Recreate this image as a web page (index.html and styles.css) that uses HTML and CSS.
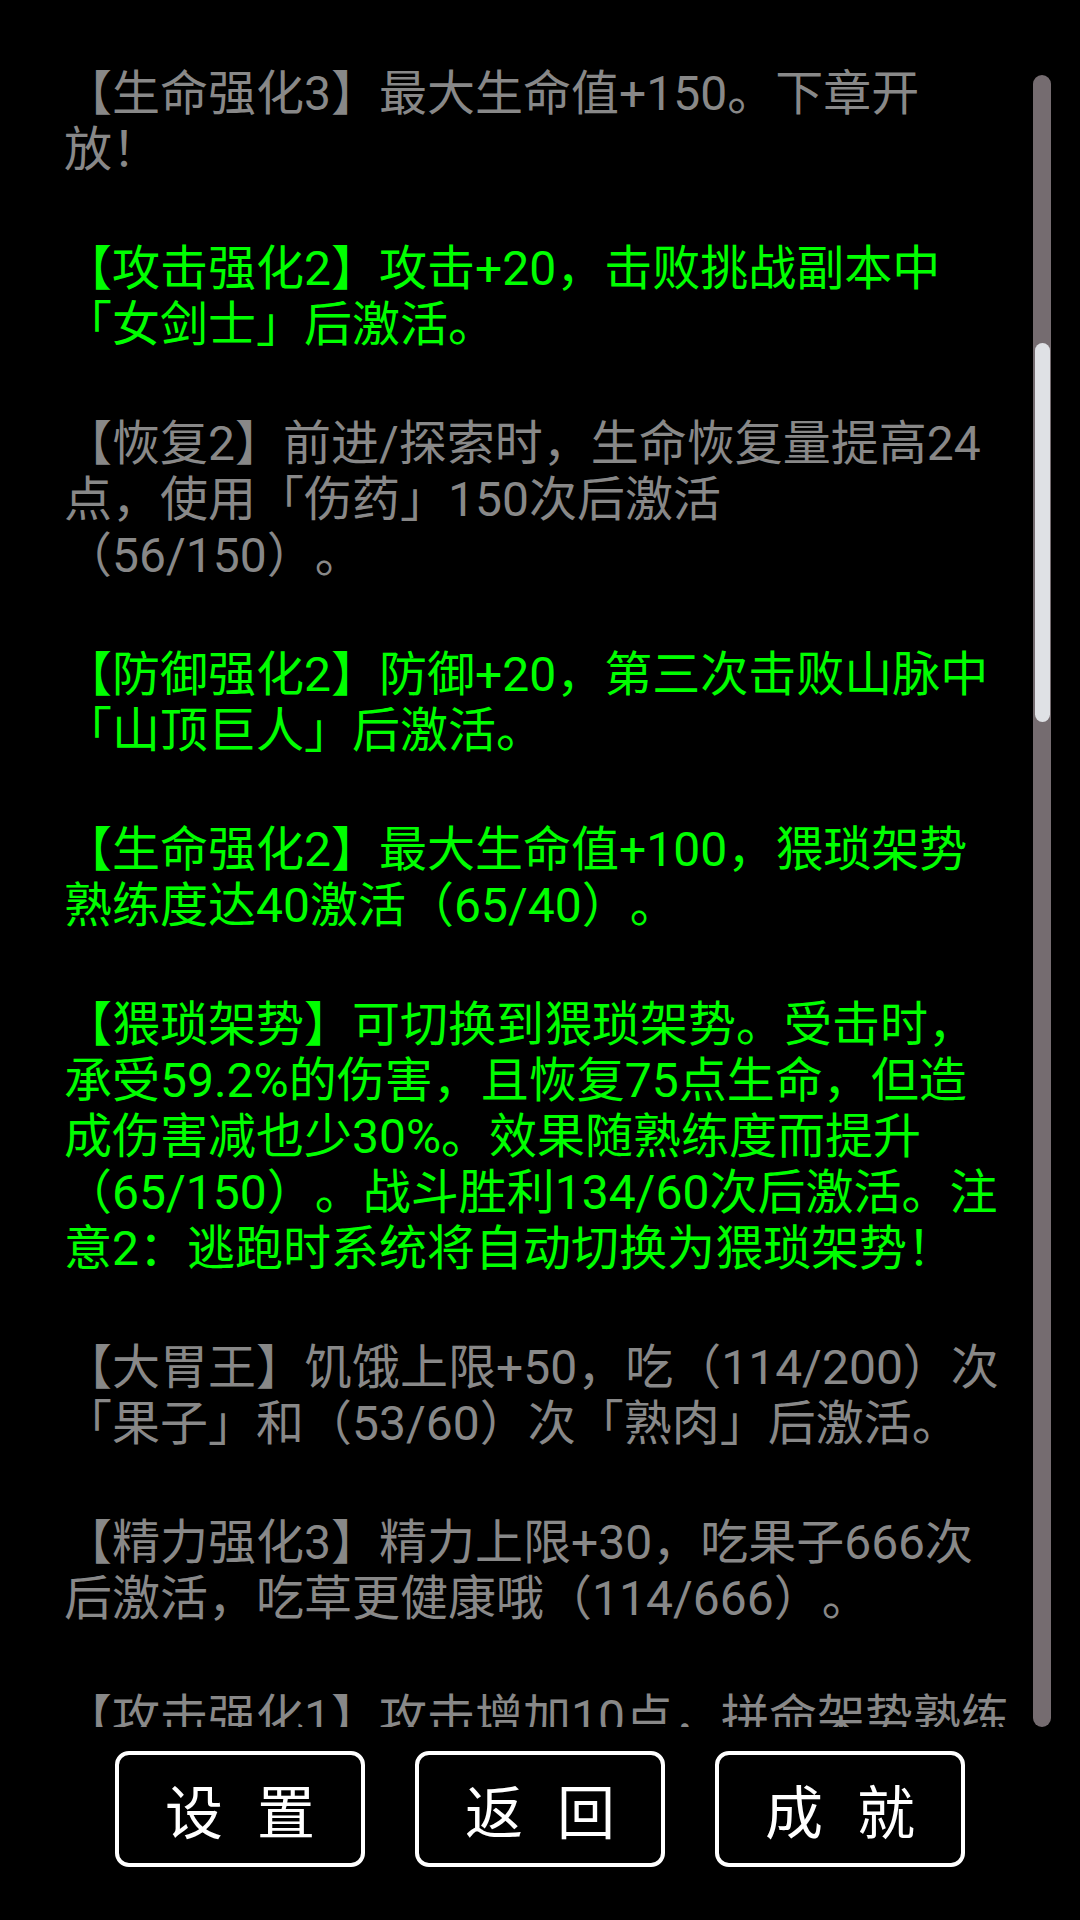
FILE: index.html
```html
<!DOCTYPE html>
<html>
<head>
    <title>天赋</title>
    <link rel="stylesheet" href="styles.css">
</head>
<body>
    <div class="screen">
        <div class="journal">
            <div class="entries">
                <p class="locked">【生命强化3】最大生命值+150。下章开<br>放！</p>
                <p class="active">【攻击强化2】攻击+20，击败挑战副本中<br>「女剑士」后激活。</p>
                <p class="locked">【恢复2】前进/探索时，生命恢复量提高24<br>点，使用「伤药」150次后激活<br>（56/150）。</p>
                <p class="active">【防御强化2】防御+20，第三次击败山脉中<br>「山顶巨人」后激活。</p>
                <p class="active">【生命强化2】最大生命值+100，猥琐架势<br>熟练度达40激活（65/40）。</p>
                <p class="active">【猥琐架势】可切换到猥琐架势。受击时，<br>承受59.2%的伤害，且恢复75点生命，但造<br>成伤害减也少30%。效果随熟练度而提升<br>（65/150）。战斗胜利134/60次后激活。注<br>意2：逃跑时系统将自动切换为猥琐架势！</p>
                <p class="locked">【大胃王】饥饿上限+50，吃（114/200）次<br>「果子」和（53/60）次「熟肉」后激活。</p>
                <p class="locked">【精力强化3】精力上限+30，吃果子666次<br>后激活，吃草更健康哦（114/666）。</p>
                <p class="locked">【攻击强化1】攻击增加10点，拼命架势熟练</p>
            </div>
            <div class="scrollbar">
                <div class="thumb"></div>
            </div>
        </div>

        <div class="actions">
            <button class="action">设置</button>
            <button class="action">返回</button>
            <button class="action">成就</button>
        </div>
    </div>
</body>
</html>
```

FILE: styles.css
```css
body {
    margin: 0;
    background-color: #000000;
    font-family: Roboto, "Noto Sans CJK SC", sans-serif;
}

.screen {
    width: 1080px;
    height: 1920px;
    display: flex;
    flex-direction: column;
}

.journal {
    display: flex;
    height: 1661px;
    margin-top: 66px;
}

.entries {
    flex: 1;
    overflow: hidden;
    padding-left: 64px;
}

.entries p {
    margin: 0 0 63px 0;
    font-size: 48px;
    line-height: 56px;
    white-space: nowrap;
    text-spacing-trim: space-all;
}

.locked {
    color: #888888;
}

.active {
    color: #00ff00;
}

.scrollbar {
    width: 18px;
    margin: 9px 29px 0 0;
    background-color: #756c70;
    border-radius: 9px;
}

.thumb {
    margin: 268px 1.5px 0 1.5px;
    height: 379px;
    background-color: #dfe1e5;
    border-radius: 8px;
}

.actions {
    display: flex;
    justify-content: center;
    gap: 50px;
    margin-top: 24px;
}

.action {
    width: 250px;
    height: 116px;
    box-sizing: border-box;
    background-color: #000000;
    border: 4px solid #ffffff;
    border-radius: 14px;
    color: #ffffff;
    font-family: Roboto, "Noto Sans CJK SC", sans-serif;
    font-size: 58px;
    letter-spacing: 34px;
    padding: 0 0 0 34px;
    cursor: pointer;
}
```
